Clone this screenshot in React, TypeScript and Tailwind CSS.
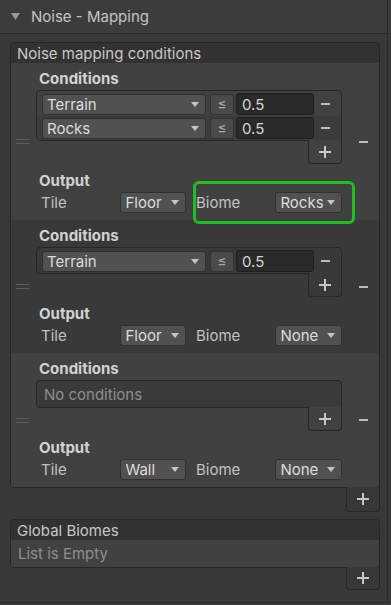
import React from "react";

function Tri({ className = "" }: { className?: string }) {
  return (
    <svg width="8" height="5" viewBox="0 0 8 5" className={className}>
      <polygon points="0,0 8,0 4,5" fill="#c4c4c4" />
    </svg>
  );
}

function Plus() {
  return (
    <svg width="12" height="12" viewBox="0 0 12 12">
      <rect x="0" y="5" width="12" height="2" fill="#c8c8c8" />
      <rect x="5" y="0" width="2" height="12" fill="#c8c8c8" />
    </svg>
  );
}

function Minus({ className = "" }: { className?: string }) {
  return <div className={`h-[2px] w-[9px] bg-[#bdbdbd] ${className}`} />;
}

function Dropdown({ label, className }: { label: string; className: string }) {
  return (
    <div
      className={`flex h-[21px] items-center justify-between rounded-[3px] border border-[#303030] bg-[#515151] pl-[4px] pr-[6px] text-[#dcdcdc] ${className}`}
    >
      <span>{label}</span>
      <Tri />
    </div>
  );
}

function CondRow({ label, bg }: { label: string; bg: string }) {
  return (
    <div className={`flex h-[24px] items-center pl-[5px] ${bg}`}>
      <Dropdown label={label} className="w-[164px]" />
      <div className="ml-[4px] flex h-[21px] w-[24px] items-center justify-center rounded-[3px] border border-[#333333] bg-[#4a4a4a] text-[14px] text-[#a8a8a8]">
        ≤
      </div>
      <div className="ml-[2px] flex h-[22px] w-[78px] items-center rounded-[3px] border border-[#1e1e1e] bg-[#2a2a2a] pl-[5px] text-[#d4d4d4]">
        0.5
      </div>
      <Minus className="ml-[7px]" />
    </div>
  );
}

function Footer({ bg, className = "" }: { bg: string; className?: string }) {
  return (
    <div
      className={`-mt-px ml-auto flex w-[34px] items-center justify-center rounded-b-[4px] border border-t-0 border-[#262626] ${bg} ${className}`}
    >
      <Plus />
    </div>
  );
}

function Item({
  bg,
  conds,
  tile,
  biome,
  highlight,
}: {
  bg: string;
  conds: string[];
  tile: string;
  biome: string;
  highlight?: boolean;
}) {
  return (
    <div className={`relative flex ${bg}`}>
      <div className="flex w-[25px] items-center">
        <div className="ml-[5px] flex flex-col gap-[3px]">
          <div className="h-px w-[13px] bg-[#5e5e5e]" />
          <div className="h-px w-[13px] bg-[#5e5e5e]" />
        </div>
      </div>
      <div className="w-[306px] pt-[4px] pb-[7px]">
        <div className="flex h-[22px] items-center pl-[3px] font-bold text-[#d2d2d2]">Conditions</div>
        <div className="mt-px">
          {conds.length > 0 ? (
            <div className="rounded-t-[4px] rounded-bl-[4px] border border-[#262626] pt-px">
              {conds.map((c, i) => (
                <CondRow key={i} label={c} bg={i % 2 === 1 ? "bg-[#3b3b3b]" : ""} />
              ))}
            </div>
          ) : (
            <div className="flex h-[28px] items-center rounded-t-[4px] rounded-bl-[4px] border border-[#262626] bg-[#3a3a3a] pl-[7px] text-[#8e8e8e]">
              No conditions
            </div>
          )}
          <Footer bg={bg} className="h-[24px]" />
        </div>
        <div className="mt-[5px] flex h-[22px] items-center pl-[3px] font-bold text-[#d2d2d2]">Output</div>
        <div className="mt-px flex items-center pl-[5px] text-[#c2c2c2]">
          <span className="w-[80px]">Tile</span>
          <Dropdown label={tile} className="w-[66px]" />
          <span className="ml-[10px] w-[80px]">Biome</span>
          <Dropdown label={biome} className="w-[67px]" />
        </div>
      </div>
      <div className="flex flex-1 items-center justify-center pl-[5px]">
        <Minus />
      </div>
      {highlight && (
        <div className="absolute left-[182px] top-[118px] z-10 h-[43px] w-[162px] rounded-[6px] border-[3px] border-[#1fbf1f]" />
      )}
    </div>
  );
}

export default function App() {
  return (
    <div className="h-[605px] w-[391px] bg-[#383838] font-['Inter',sans-serif] text-[15px] leading-none">
      <div className="h-[603px] w-[388px] border-r border-b border-[#2a2a2a]">
        <div className="flex h-[34px] items-center border-b border-[#282828] bg-[#3c3c3c]">
          <svg width="9" height="7" viewBox="0 0 9 7" className="ml-[11px]">
            <polygon points="0,0 9,0 4.5,7" fill="#9a9a9a" />
          </svg>
          <span className="ml-[11px] text-[#c4c4c4]">Noise - Mapping</span>
        </div>

        <div className="ml-[10px] mt-[8px] w-[370px]">
          <div className="overflow-hidden rounded-[4px] border border-[#262626]">
            <div className="flex h-[20px] items-center bg-[#323232] pl-[6px] text-[#c8c8c8]">
              Noise mapping conditions
            </div>
            <Item bg="bg-[#414141]" conds={["Terrain", "Rocks"]} tile="Floor" biome="Rocks" highlight />
            <Item bg="bg-[#393939]" conds={["Terrain"]} tile="Floor" biome="None" />
            <Item bg="bg-[#414141]" conds={[]} tile="Wall" biome="None" />
          </div>
          <Footer bg="bg-[#383838]" className="h-[25px]" />

          <div className="mt-[7px] overflow-hidden rounded-[4px] border border-[#262626]">
            <div className="flex h-[20px] items-center bg-[#323232] pl-[6px] text-[#c8c8c8]">Global Biomes</div>
            <div className="flex h-[27px] items-center bg-[#414141] pl-[7px] text-[#8e8e8e]">List is Empty</div>
          </div>
          <Footer bg="bg-[#383838]" className="h-[23px]" />
        </div>
      </div>
    </div>
  );
}
